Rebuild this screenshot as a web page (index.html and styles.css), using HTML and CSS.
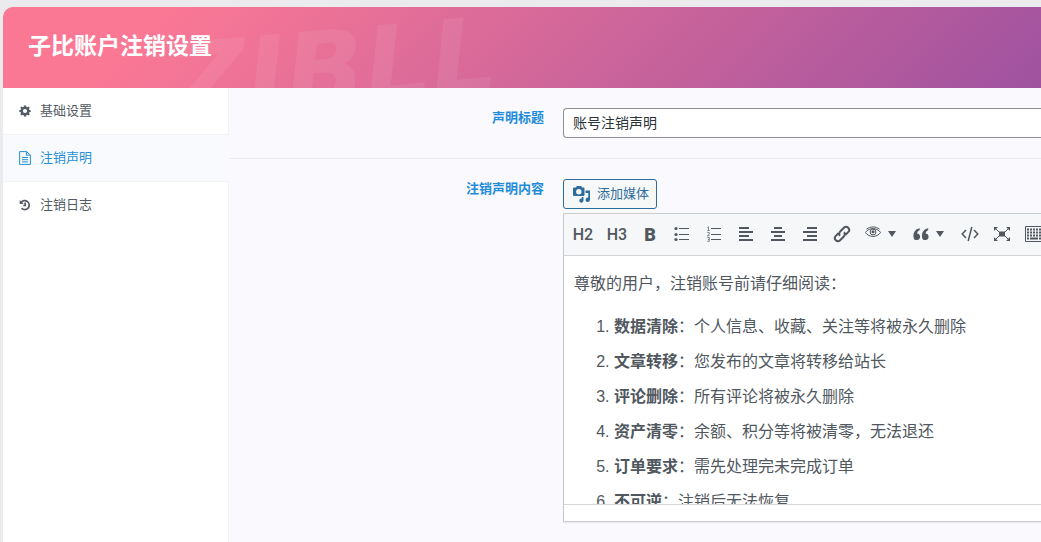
FILE: index.html
```
<!DOCTYPE html>
<html lang="zh-CN">
<head>
    <meta charset="UTF-8">
    <title>子比账户注销设置</title>
    <link rel="stylesheet" href="styles.css">
</head>
<body>
<div class="panel">
    <header class="header">
        <span class="watermark" aria-hidden="true">ZIBLL</span>
        <h1>子比账户注销设置</h1>
    </header>

    <div class="wrapper">
        <nav class="sidebar">
            <a href="#basic">
                <svg viewBox="0 0 512 512"><path fill-rule="evenodd" d="M210 20h92l12 62 36 16 53-36 57 57-36 53 16 36 62 12v72l-62 14-16 36 36 53-57 57-53-36-36 16-12 62h-92l-12-62-36-16-53 36-57-57 36-53-16-36-62-14v-72l62-12 16-36-36-53 57-57 53 36 36-16zM256 168a88 88 0 1 0 0 176a88 88 0 1 0 0-176z"/></svg>
                基础设置
            </a>
            <a href="#notice" class="active">
                <svg viewBox="0 0 12 14" class="line"><path d="M.6.6h7L11.400 4.200v9.200H.6zM7.400.6V4.200h4M3 6.500h6M3 8.700h6M3 10.900h6"/></svg>
                注销声明
            </a>
            <a href="#log">
                <svg viewBox="0 0 14 14" class="history"><path d="M2.400 4.200A5.200 5.200 0 1 1 3 10.800M7.200 4v3.600H4.900"/><path class="solid" d="M.8 1.200v4.600h4.700z"/></svg>
                注销日志
            </a>
        </nav>

        <main class="content">
            <div class="field">
                <label for="noticeTitle">声明标题</label>
                <div>
                    <input id="noticeTitle" type="text" value="账号注销声明">
                </div>
            </div>

            <div class="field">
                <label id="noticeLabel">注销声明内容</label>
                <div>
                    <button type="button" class="add-media">
                        <svg viewBox="0 0 18 18"><path fill-rule="evenodd" d="M1 2.500h2l.8-1.500h4.400l.8 1.500h1.500q1 0 1 1V10q0 1-1 1H1q-1 0-1-1V3.500q0-1 1-1zM5.800 4a2.700 2.700 0 1 0 0 5.400a2.700 2.700 0 1 0 0-5.400z"/><path d="M12.500 5.500H17v9.300a2.200 2.200 0 1 1-1.700-2.200V8h-2.800zM8.800 12h1.700v3.600a2.100 2.100 0 1 1-1.700-2.100z"/></svg>
                        添加媒体
                    </button>
                    <div class="editor">
                        <div class="toolbar">
                            <button type="button" class="heading">H2</button>
                            <button type="button" class="heading">H3</button>
                            <button type="button" class="bold" aria-label="粗体">B</button>
                            <button type="button" aria-label="项目列表">
                                <svg viewBox="0 0 16 16"><path d="M5 2.500h10M5 8.500h10M5 13.500h10"/><circle cx="2" cy="2.500" r="1.600" class="solid"/><circle cx="2" cy="8.500" r="1.600" class="solid"/><circle cx="2" cy="13.500" r="1.600" class="solid"/></svg>
                            </button>
                            <button type="button" aria-label="编号列表">
                                <svg viewBox="0 0 16 16"><path d="M5 2.500h10M5 8.500h10M5 13.500h10"/><path class="thin" d="M1.500 1.500l1-.7v3.700M1.200 4.500h2.400M1.300 6.500h2v1.600l-2 1.700h2.300M1.300 11.500h2v3.800h-2M1.800 13.400h1.500"/></svg>
                            </button>
                            <button type="button" aria-label="左对齐">
                                <svg viewBox="0 0 16 16" class="thick"><path d="M1 2h10M1 6h14M1 10h10M1 14h14"/></svg>
                            </button>
                            <button type="button" aria-label="居中对齐">
                                <svg viewBox="0 0 16 16" class="thick"><path d="M4 2h8M1 6h14M4 10h8M1 14h14"/></svg>
                            </button>
                            <button type="button" aria-label="右对齐">
                                <svg viewBox="0 0 16 16" class="thick"><path d="M5 2h10M1 6h14M5 10h10M1 14h14"/></svg>
                            </button>
                            <button type="button" aria-label="链接">
                                <svg viewBox="0 0 18 18" class="large link"><path d="M7 10.800a3 3 0 0 1 .2-4.300l3.700-3.700a3 3 0 0 1 4.300 4.300l-2.700 2.700M11 7.200a3 3 0 0 1-.2 4.300l-3.700 3.700a3 3 0 0 1-4.300-4.300l2.700-2.700"/></svg>
                            </button>
                            <button type="button" class="split" aria-label="可见内容">
                                <svg viewBox="0 0 16 16"><path d="M.4 6.500C4 1.300 12 1.300 15.600 6.500C12 11.700 4 11.700.4 6.500z"/><path d="M1.500 3.200C5.500.2 10.500.2 14.500 3.200"/><circle cx="8" cy="6" r="2.900"/><circle cx="8" cy="5.700" r="1.500" class="solid"/></svg>
                                <i class="caret"></i>
                            </button>
                            <button type="button" class="split" aria-label="引用">
                                <svg viewBox="0 0 16 16" class="fill"><path d="M6.700 2.200V4Q4.200 5 4 7.500a3.300 3.300 0 1 1-3.500 3.700C.1 6.200 2.200 3 6.700 2.200zM15.200 2.200V4Q12.700 5 12.500 7.500A3.300 3.300 0 1 1 9 11.200C8.600 6.200 10.700 3 15.200 2.200z"/></svg>
                                <i class="caret"></i>
                            </button>
                            <button type="button" aria-label="代码">
                                <svg viewBox="0 0 18 18" class="large code"><path d="M5 5L1.200 9L5 13M13 5l3.800 4L13 13M10.800 2L7.200 16"/></svg>
                            </button>
                            <button type="button" aria-label="全屏">
                                <svg viewBox="0 0 18 18" class="large"><path class="solid" d="M6 6.500h6v5H6zM1 2h4L1 6zM17 2v4l-4-4zM1 16v-4l4 4zM17 16h-4l4-4z"/><path d="M2 3l4 4M16 3l-4 4M2 15l4-4M16 15l-4-4"/></svg>
                            </button>
                            <button type="button" aria-label="更多工具">
                                <svg viewBox="0 0 18 18" class="large"><path d="M.5 1.500h17v15H.5z"/><path class="keys" d="M2 4.500h14M2 7.500h14M2 10.500h14"/><path class="bar" d="M2 13.500h2M5 13.500h8M14 13.500h2"/></svg>
                            </button>
                        </div>
                        <div class="editor-body" contenteditable="true" role="textbox" aria-labelledby="noticeLabel" spellcheck="false">
                            <p>尊敬的用户，注销账号前请仔细阅读：</p>
                            <ol>
                                <li><strong>数据清除</strong>：个人信息、收藏、关注等将被永久删除</li>
                                <li><strong>文章转移</strong>：您发布的文章将转移给站长</li>
                                <li><strong>评论删除</strong>：所有评论将被永久删除</li>
                                <li><strong>资产清零</strong>：余额、积分等将被清零，无法退还</li>
                                <li><strong>订单要求</strong>：需先处理完未完成订单</li>
                                <li><strong>不可逆</strong>：注销后无法恢复</li>
                            </ol>
                        </div>
                        <div class="statusbar"></div>
                    </div>
                </div>
            </div>
        </main>
    </div>
</div>
</body>
</html>
```

FILE: styles.css
```
* {
    box-sizing: border-box;
}

body {
    margin: 0;
    min-height: 100vh;
    display: flex;
    padding: 7px 0 0 3px;
    background: #ebebed;
    color: #50575e;
    font: 13px/20px "Liberation Sans", "Noto Sans CJK SC", sans-serif;
    overflow-x: hidden;
}

button, input {
    font: inherit;
}

svg {
    flex: none;
    fill: currentColor;
}

.panel {
    flex: 1;
    min-width: 0;
    display: flex;
    flex-direction: column;
}

/* header */
.header {
    position: relative;
    overflow: hidden;
    padding: 23px 25px 26px;
    border-radius: 10px 0 0 0;
    background: linear-gradient(135deg, #fb7895 15%, #9f52a0 100%);
    color: white;
}

.header h1 {
    position: relative;
    margin: 0;
    font-size: 23px;
    line-height: 32px;
}

.watermark {
    position: absolute;
    left: 168px;
    top: 12px;
    font: italic bold 104px/100px "DejaVu Sans", sans-serif;
    color: rgba(255, 255, 255, 0.07);
    transform: rotate(-5deg);
}

.wrapper {
    flex: 1;
    display: flex;
}

/* sidebar */
.sidebar {
    flex: 0 0 226px;
    background: white;
    border-right: 1px solid #f3f3f6;
}

.sidebar a {
    display: flex;
    align-items: center;
    gap: 9px;
    height: 47px;
    padding-left: 16px;
    border-bottom: 1px solid #f3f3f6;
    color: #555b63;
    text-decoration: none;
}

.sidebar a:last-child {
    border-bottom-color: transparent;
}

.sidebar .active {
    margin-right: -1px;
    background: #f9fafd;
    color: #2490d5;
}

.sidebar svg {
    width: 12px;
    height: 14px;
}

.sidebar .line {
    fill: none;
    stroke: currentColor;
}

.sidebar .history {
    fill: none;
    stroke: currentColor;
    stroke-width: 2;
}

.sidebar .solid {
    fill: currentColor;
    stroke: none;
}

/* fields */
.content {
    flex: 1;
    min-width: 0;
    background: #f9f9fe;
}

.field {
    display: grid;
    grid-template-columns: 315px minmax(0, 1fr);
    gap: 19px;
    padding: 20px 0;
}

.field + .field {
    border-top: 1px solid #ebebf0;
}

.field label {
    text-align: right;
    font-weight: bold;
    color: #1e8cd8;
}

.field input {
    display: block;
    width: 100%;
    height: 30px;
    padding: 0 9px 2px;
    border: 1px solid #8c8f94;
    border-right: 0;
    border-radius: 4px 0 0 4px;
    background: white;
    color: #2c3338;
    font-size: 14px;
}

.add-media {
    display: flex;
    align-items: center;
    gap: 6px;
    height: 30px;
    padding: 0 7px 0 9px;
    margin-bottom: 4px;
    border: 1px solid #2d6d9e;
    border-radius: 3px;
    background: #f6f7f7;
    color: #2d6d9e;
}

.add-media svg {
    width: 18px;
    height: 18px;
}

/* editor */
.editor {
    border: 1px solid #c8cbcf;
    border-right: 0;
    background: white;
    box-shadow: 0 1px 1px rgba(0, 0, 0, 0.06);
}

.toolbar {
    display: flex;
    height: 42px;
    padding: 0 0 1px 2px;
    overflow: hidden;
    border-bottom: 1px solid #cfd2d6;
    background: #f6f7f8;
}

.toolbar button {
    flex: none;
    display: flex;
    align-items: center;
    justify-content: center;
    width: 32px;
    padding: 0;
    border: 0;
    background: none;
    color: #50575e;
}

.toolbar .heading {
    width: 34px;
    font: 500 16px Roboto, sans-serif;
}

.toolbar .bold {
    font: 900 18px Roboto, sans-serif;
}

.toolbar .split {
    width: 48px;
    gap: 7px;
    justify-content: flex-start;
    padding-left: 7px;
}

.toolbar svg {
    width: 16px;
    height: 16px;
    fill: none;
    stroke: currentColor;
}

.toolbar .large {
    width: 18px;
    height: 18px;
}

.toolbar .solid,
.toolbar .fill {
    fill: currentColor;
    stroke: none;
}

.toolbar .thin {
    stroke-width: 0.7;
}

.toolbar .thick,
.toolbar .link {
    stroke-width: 2;
}

.toolbar .code {
    stroke-width: 1.5;
}

.toolbar .keys {
    stroke-width: 2;
    stroke-dasharray: 2 1;
}

.toolbar .bar {
    stroke-width: 2;
}

.caret {
    border: 4px solid transparent;
    border-top: 6px solid currentColor;
    border-bottom: 0;
}

.editor-body {
    height: 248px;
    padding: 15px 10px 0;
    overflow: hidden;
    outline: 0;
    font-size: 16px;
    line-height: 25px;
}

.editor-body p {
    margin: 0 0 18px;
}

.editor-body ol {
    margin: 0;
    padding-left: 40px;
}

.editor-body li {
    margin-bottom: 10px;
}

.statusbar {
    height: 17px;
    border-top: 1px solid #d5d7da;
}
```
